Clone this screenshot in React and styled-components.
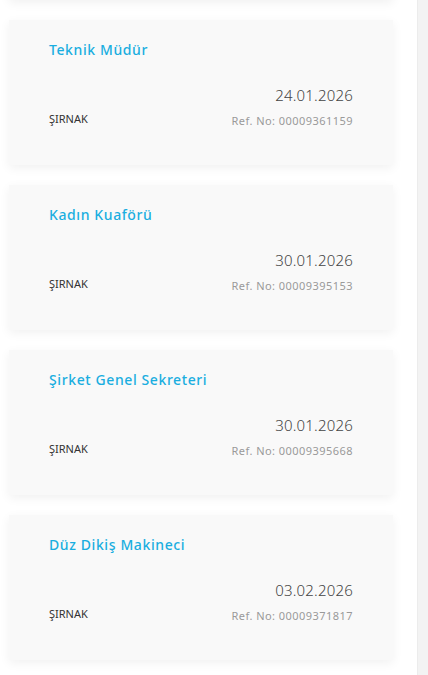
import React from "react";
import styled, { createGlobalStyle } from "styled-components";

const GlobalStyle = createGlobalStyle`
  html, body {
    margin: 0;
    padding: 0;
    background: #ffffff;
    overflow: hidden;
  }
  body {
    font-family: "Noto Sans", "Open Sans", sans-serif;
  }
`;

const Page = styled.div`
  display: flex;
  width: 428px;
  height: 675px;
  overflow: hidden;
`;

const List = styled.div`
  width: 418px;
  display: flex;
  flex-direction: column;
  gap: 20px;
  margin-top: -145px;
`;

const Scrollbar = styled.div`
  width: 10px;
  flex-shrink: 0;
  background: #f3f3f3;
  border-left: 1px solid #ececec;
`;

const Card = styled.div`
  box-sizing: border-box;
  margin-left: 9px;
  width: 384px;
  height: 145px;
  flex-shrink: 0;
  padding: 19px 40px 0;
  background: #f9f9f9;
  box-shadow: 0 3px 10px rgba(0, 0, 0, 0.06);
  display: flex;
  flex-direction: column;
`;

const Title = styled.div`
  font-size: 14px;
  line-height: 21px;
  font-weight: 500;
  letter-spacing: 0.6px;
  color: #1aaee0;
  margin-bottom: 24px;
`;

const Bottom = styled.div`
  display: flex;
  justify-content: space-between;
  align-items: flex-end;
`;

const City = styled.div`
  font-size: 11px;
  line-height: 16px;
  color: #333;
  margin-bottom: 2px;
`;

const Meta = styled.div`
  display: flex;
  flex-direction: column;
  align-items: flex-end;
  gap: 7px;
`;

const DateText = styled.div`
  font-size: 15px;
  line-height: 22px;
  font-weight: 300;
  letter-spacing: 0.2px;
  color: #444;
`;

const Ref = styled.div`
  font-size: 11px;
  line-height: 16px;
  letter-spacing: 0.45px;
  color: #9a9a9a;
`;

const jobs = [
  { title: "Teknik Müdür", date: "24.01.2026", ref: "00009361159" },
  { title: "Kadın Kuaförü", date: "30.01.2026", ref: "00009395153" },
  { title: "Şirket Genel Sekreteri", date: "30.01.2026", ref: "00009395668" },
  { title: "Düz Dikiş Makineci", date: "03.02.2026", ref: "00009371817" },
];

export default function App() {
  return (
    <>
      <GlobalStyle />
      <Page>
        <List>
          <Card />
          {jobs.map((job) => (
            <Card key={job.ref}>
              <Title>{job.title}</Title>
              <Bottom>
                <City>ŞIRNAK</City>
                <Meta>
                  <DateText>{job.date}</DateText>
                  <Ref>Ref. No: {job.ref}</Ref>
                </Meta>
              </Bottom>
            </Card>
          ))}
        </List>
        <Scrollbar />
      </Page>
    </>
  );
}
